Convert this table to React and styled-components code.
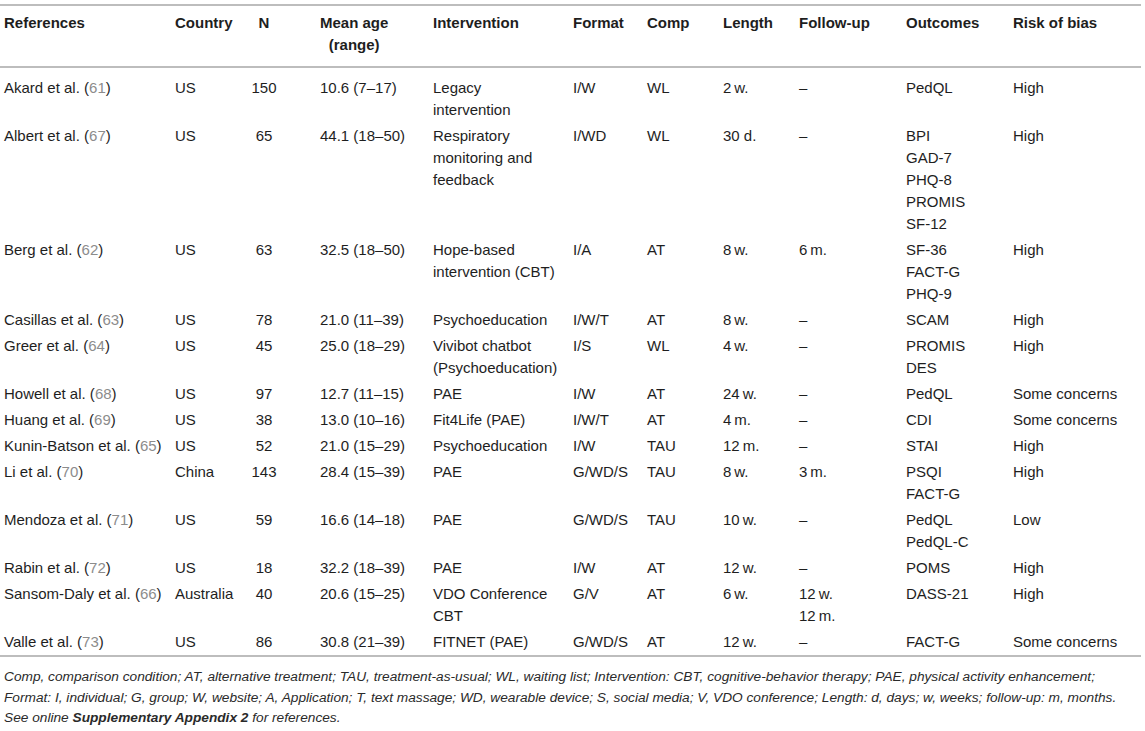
import styled, {createGlobalStyle} from "styled-components";

const GlobalStyle = createGlobalStyle`
    body {
        margin: 0;
        background: #ffffff;
        font-family: "Liberation Sans", Arial, sans-serif;
        color: #1e1e1e;
    }
`

const Page = styled.div`
    width: 1141px;
    padding-top: 4px;
`
const Table = styled.table`
    width: 1141px;
    table-layout: fixed;
    border-collapse: collapse;
    border-top: 2px solid #bdbdbd;
    border-bottom: 2px solid #bdbdbd;
    font-size: 15px;
`
const Col = styled.col`
    width: ${(props) => props.$w}px;
`
const HeadRow = styled.tr`
    border-bottom: 2px solid #bdbdbd;
`
const HeadCell = styled.th`
    font-weight: bold;
    line-height: 22px;
    padding: 6px 4px 10px ${(props) => props.$pad || 4}px;
    text-align: ${(props) => props.$align || "left"};
    vertical-align: top;
    white-space: nowrap;
`
const HeadStack = styled.span`
    display: inline-block;
    text-align: center;
`
const Row = styled.tr`
    &:first-child td {
        padding-top: 9px;
    }
`
const Cell = styled.td`
    line-height: 22px;
    padding: 2px 4px 2px ${(props) => props.$pad || 4}px;
    text-align: ${(props) => props.$align || "left"};
    vertical-align: top;
    white-space: nowrap;
`
const RefNum = styled.span`
    color: #8c8c8c;
`
const Notes = styled.p`
    margin: 0;
    padding: 10px 4px 0 4px;
    font-size: 13.7px;
    font-style: italic;
    line-height: 20.5px;
    color: #2a2a2a;
    white-space: nowrap;
`

const columns = [
    {w: 171},
    {w: 65},
    {w: 56, align: "center"},
    {w: 137, pad: 28},
    {w: 140},
    {w: 74},
    {w: 76},
    {w: 76},
    {w: 107},
    {w: 107},
    {w: 132},
]

const rows = [
    ["Akard et al.", "61", "US", "150", "10.6 (7–17)", ["Legacy", "intervention"], "I/W", "WL", "2\u2009w.", "–", ["PedQL"], "High"],
    ["Albert et al.", "67", "US", "65", "44.1 (18–50)", ["Respiratory", "monitoring and", "feedback"], "I/WD", "WL", "30 d.", "–", ["BPI", "GAD-7", "PHQ-8", "PROMIS", "SF-12"], "High"],
    ["Berg et al.", "62", "US", "63", "32.5 (18–50)", ["Hope-based", "intervention (CBT)"], "I/A", "AT", "8\u2009w.", "6\u2009m.", ["SF-36", "FACT-G", "PHQ-9"], "High"],
    ["Casillas et al.", "63", "US", "78", "21.0 (11–39)", ["Psychoeducation"], "I/W/T", "AT", "8\u2009w.", "–", ["SCAM"], "High"],
    ["Greer et al.", "64", "US", "45", "25.0 (18–29)", ["Vivibot chatbot", "(Psychoeducation)"], "I/S", "WL", "4\u2009w.", "–", ["PROMIS", "DES"], "High"],
    ["Howell et al.", "68", "US", "97", "12.7 (11–15)", ["PAE"], "I/W", "AT", "24\u2009w.", "–", ["PedQL"], "Some concerns"],
    ["Huang et al.", "69", "US", "38", "13.0 (10–16)", ["Fit4Life (PAE)"], "I/W/T", "AT", "4\u2009m.", "–", ["CDI"], "Some concerns"],
    ["Kunin-Batson et al.", "65", "US", "52", "21.0 (15–29)", ["Psychoeducation"], "I/W", "TAU", "12\u2009m.", "–", ["STAI"], "High"],
    ["Li et al.", "70", "China", "143", "28.4 (15–39)", ["PAE"], "G/WD/S", "TAU", "8\u2009w.", "3\u2009m.", ["PSQI", "FACT-G"], "High"],
    ["Mendoza et al.", "71", "US", "59", "16.6 (14–18)", ["PAE"], "G/WD/S", "TAU", "10\u2009w.", "–", ["PedQL", "PedQL-C"], "Low"],
    ["Rabin et al.", "72", "US", "18", "32.2 (18–39)", ["PAE"], "I/W", "AT", "12\u2009w.", "–", ["POMS"], "High"],
    ["Sansom-Daly et al.", "66", "Australia", "40", "20.6 (15–25)", ["VDO Conference", "CBT"], "G/V", "AT", "6\u2009w.", ["12\u2009w.", "12\u2009m."], ["DASS-21"], "High"],
    ["Valle et al.", "73", "US", "86", "30.8 (21–39)", ["FITNET (PAE)"], "G/WD/S", "AT", "12\u2009w.", "–", ["FACT-G"], "Some concerns"],
]

const Lines = ({value}) => {
    if (!Array.isArray(value)) return value;
    return value.map((line, i) => (
        <span key={i}>
            {line}
            {i < value.length - 1 && <br />}
        </span>
    ));
}

const App = () => {
    return (
        <Page>
            <GlobalStyle />
            <Table>
                <colgroup>
                    {columns.map((c, i) => <Col key={i} $w={c.w} />)}
                </colgroup>
                <thead>
                    <HeadRow>
                        <HeadCell>References</HeadCell>
                        <HeadCell>Country</HeadCell>
                        <HeadCell $align="center">N</HeadCell>
                        <HeadCell $pad={28}>
                            <HeadStack>Mean age<br />(range)</HeadStack>
                        </HeadCell>
                        <HeadCell>Intervention</HeadCell>
                        <HeadCell>Format</HeadCell>
                        <HeadCell>Comp</HeadCell>
                        <HeadCell>Length</HeadCell>
                        <HeadCell>Follow-up</HeadCell>
                        <HeadCell>Outcomes</HeadCell>
                        <HeadCell>Risk of bias</HeadCell>
                    </HeadRow>
                </thead>
                <tbody>
                    {rows.map((r) => {
                        const [author, ref, ...rest] = r;
                        return (
                            <Row key={author}>
                                <Cell>
                                    {author} (<RefNum>{ref}</RefNum>)
                                </Cell>
                                {rest.map((val, i) => {
                                    const c = columns[i + 1];
                                    return (
                                        <Cell key={i} $align={c.align} $pad={c.pad}>
                                            <Lines value={val} />
                                        </Cell>
                                    );
                                })}
                            </Row>
                        );
                    })}
                </tbody>
            </Table>
            <Notes>
                Comp, comparison condition; AT, alternative treatment; TAU, treatment-as-usual; WL, waiting list; Intervention: CBT, cognitive-behavior therapy; PAE, physical activity enhancement;
                <br />
                Format: I, individual; G, group; W, website; A, Application; T, text massage; WD, wearable device; S, social media; V, VDO conference; Length: d, days; w, weeks; follow-up: m, months.
                <br />
                See online <b>Supplementary Appendix 2</b> for references.
            </Notes>
        </Page>
    );
}

export default App;
